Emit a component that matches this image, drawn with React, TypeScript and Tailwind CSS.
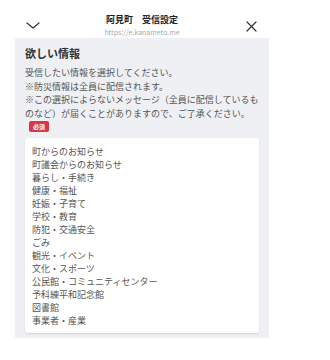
import React from "react";

const items = [
  "町からのお知らせ",
  "町議会からのお知らせ",
  "暮らし・手続き",
  "健康・福祉",
  "妊娠・子育て",
  "学校・教育",
  "防犯・交通安全",
  "ごみ",
  "観光・イベント",
  "文化・スポーツ",
  "公民館・コミュニティセンター",
  "予科練平和記念館",
  "図書館",
  "事業者・産業",
];

const font = { fontFamily: '"Noto Sans CJK JP", "Noto Sans", sans-serif' };

export default function App() {
  return (
    <div className="w-[284px] bg-white" style={font}>
      <div className="relative h-[38px] flex items-center justify-between">
        <svg className="absolute left-[26px] top-[22px]" width="14" height="7" viewBox="0 0 14 7" fill="none">
          <path d="M1 1 L7 6 L13 1" stroke="#333" strokeWidth="1.2" strokeLinecap="round" strokeLinejoin="round" />
        </svg>
        <div className="absolute left-0 right-0 top-[14px] flex flex-col items-center">
          <div className="text-[9px] leading-[12px] font-bold text-[#222]">阿見町　受信設定</div>
          <div className="text-[7px] leading-[10px] text-[#aaa] mt-[1px]">https://e.kanameto.me</div>
        </div>
        <svg className="absolute left-[246px] top-[21px]" width="11" height="11" viewBox="0 0 11 11" fill="none">
          <path d="M1 1 L10 10 M10 1 L1 10" stroke="#333" strokeWidth="1.2" strokeLinecap="round" />
        </svg>
      </div>
      <div className="mx-[15px] bg-[#eef0f4] px-[10px] pt-[8px] pb-[5px]">
        <h2 className="text-[11px] leading-[15px] font-bold text-[#333]">欲しい情報</h2>
        <p className="mt-[5px] text-[9px] leading-[13.5px] text-[#555] whitespace-nowrap">
          受信したい情報を選択してください。
          <br />
          ※防災情報は全員に配信されます。
          <br />
          ※この選択によらないメッセージ（全員に配信しているも
          <br />
          のなど）が届くことがありますので、ご了承ください。
        </p>
        <div className="mt-[1px] ml-[4px] flex items-center justify-center w-[20px] h-[11px] rounded-[2px] bg-[#dc3545] text-white text-[6px] leading-none font-bold">
          必須
        </div>
        <div className="mt-[6px] bg-white rounded-[3px] shadow-[0_1px_2px_rgba(0,0,0,0.12)] pl-[7px] py-[6.5px]">
          {items.map((t) => (
            <div key={t} className="text-[9px] leading-[13px] text-[#555]">
              {t}
            </div>
          ))}
        </div>
      </div>
    </div>
  );
}
